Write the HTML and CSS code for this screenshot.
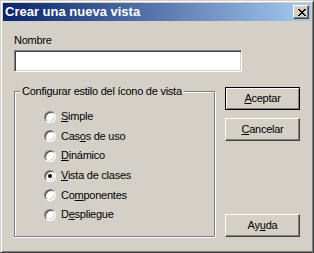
FILE: index.html
```html
<!DOCTYPE html>
<html>
	<head>
		<meta charset="UTF-8">
		<title>Crear una nueva vista</title>
		<link rel="stylesheet" href="styles.css">
	</head>
	<body>
		<div class="dialog">
			<div class="titlebar">
				<span class="title">Crear una nueva vista</span>
				<button class="close">
					<svg width="8" height="7" viewBox="0 0 8 7" shape-rendering="crispEdges">
						<path d="M0 0h2v1H0zM6 0h2v1H6zM1 1h2v1H1zM5 1h2v1H5zM2 2h4v1H2zM3 3h2v1H3zM2 4h4v1H2zM1 5h2v1H1zM5 5h2v1H5zM0 6h2v1H0zM6 6h2v1H6z" fill="#000"/>
					</svg>
				</button>
			</div>
			<div class="body">
				<div class="left">
					<label class="label">Nombre</label>
					<div class="field"></div>
					<fieldset class="group">
						<legend>Configurar estilo del ícono de vista</legend>
						<ul class="options">
							<li><i class="radio"></i><span><u>S</u>imple</span></li>
							<li><i class="radio"></i><span>Cas<u>o</u>s de uso</span></li>
							<li><i class="radio"></i><span><u>D</u>inámico</span></li>
							<li><i class="radio on"></i><span><u>V</u>ista de clases</span></li>
							<li><i class="radio"></i><span>Co<u>m</u>ponentes</span></li>
							<li><i class="radio"></i><span>D<u>e</u>spliegue</span></li>
						</ul>
					</fieldset>
				</div>
				<div class="buttons">
					<button class="btn default"><u>A</u>ceptar</button>
					<button class="btn"><u>C</u>ancelar</button>
					<button class="btn help">Ay<u>u</u>da</button>
				</div>
			</div>
		</div>
	</body>
</html>
```
FILE: styles.css
```css
html,body{
	margin: 0;
	padding: 0;
}
body{
	font: 11px/13px "Liberation Sans", Arial, sans-serif;
	letter-spacing: -0.25px;
	color: #000;
}
ul,li{
	margin: 0;
	padding: 0;
	list-style: none;
}
.dialog{
	width: 314px;
	height: 253px;
	box-sizing: border-box;
	background: #d4d0c8;
	border: 1px solid;
	border-color: #d4d0c8 #404040 #404040 #d4d0c8;
	box-shadow: inset 1px 1px #fff, inset -1px -1px #808080;
	padding: 2px;
	display: flex;
	flex-direction: column;
}
.titlebar{
	height: 18px;
	display: flex;
	align-items: center;
	justify-content: space-between;
	padding: 0 2px 0 2px;
	background: linear-gradient(to right, #0a246a, #a6caf0);
}
.title{
	color: #fff;
	font: bold 13px/18px "Liberation Sans", Arial, sans-serif;
	letter-spacing: 0;
}
.close{
	width: 16px;
	height: 14px;
	padding: 0 0 0 1px;
	margin: 0;
	box-sizing: border-box;
	background: #d4d0c8;
	border: 1px solid;
	border-color: #fff #404040 #404040 #fff;
	box-shadow: inset -1px -1px #808080;
	display: flex;
	align-items: center;
	justify-content: center;
}
.close svg{
	display: block;
}
.body{
	flex: 1;
	display: flex;
	gap: 10px;
	padding: 13px 11px 13px 11px;
}
.left{
	width: 201px;
	display: flex;
	flex-direction: column;
}
.label{
	display: block;
	height: 13px;
}
.field{
	width: 228px;
	height: 22px;
	margin-top: 3px;
	box-sizing: border-box;
	background: #fff;
	border: 1px solid;
	border-color: #808080 #fff #fff #808080;
	box-shadow: inset 1px 1px #404040, inset -1px -1px #d4d0c8;
}
.group{
	flex: 1;
	margin: 13px 0 0 0;
	padding: 0 0 0 5px;
	min-width: 0;
	border: 1px solid #808080;
	box-shadow: inset 1px 1px #fff, 1px 1px #fff;
}
.group legend{
	padding: 0 2px;
	margin: 0;
	background: #d4d0c8;
	line-height: 13px;
}
.options{
	padding: 9px 0 0 24px;
}
.options li{
	height: 19.6px;
	display: flex;
	align-items: center;
	gap: 5px;
}
.radio{
	width: 12px;
	height: 12px;
	box-sizing: border-box;
	border-radius: 50%;
	border: 1px solid;
	border-color: #808080 #fff #fff #808080;
	background: #fff;
	box-shadow: inset 1px 1px #404040, inset -1px -1px #d4d0c8;
	display: flex;
	align-items: center;
	justify-content: center;
}
.radio.on::after{
	content: "";
	width: 4px;
	height: 4px;
	border-radius: 50%;
	background: #000;
}
.buttons{
	width: 75px;
	display: flex;
	flex-direction: column;
}
.btn{
	width: 75px;
	height: 23px;
	margin: 8px 0 0 0;
	padding: 0;
	box-sizing: border-box;
	font: 11px/13px "Liberation Sans", Arial, sans-serif;
	letter-spacing: -0.25px;
	color: #000;
	background: #d4d0c8;
	border: 1px solid;
	border-color: #fff #404040 #404040 #fff;
	box-shadow: inset -1px -1px #808080;
}
.btn.default{
	margin-top: 53px;
	border-color: #000;
	box-shadow: inset 1px 1px #fff, inset -1px -1px #808080;
}
.btn.help{
	margin-top: auto;
}
```
